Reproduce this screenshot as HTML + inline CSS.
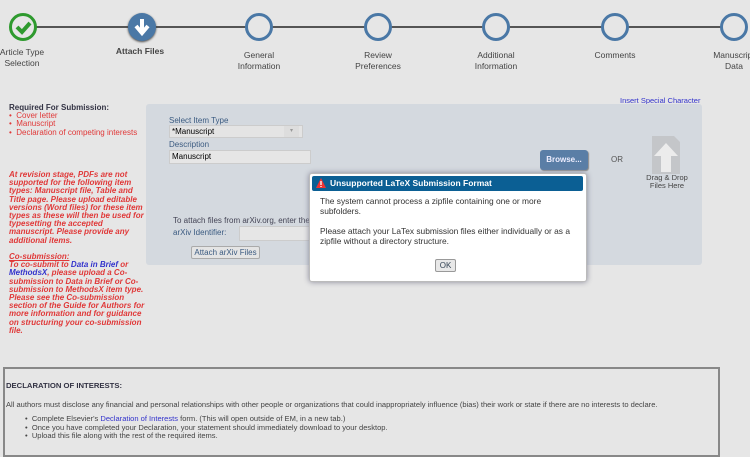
<!DOCTYPE html>
<html><head><style>
body{margin:0;width:750px;height:450px;background:#e6e6e6;font-family:"Liberation Sans",sans-serif;position:relative;overflow:hidden}
.a{position:absolute}
.c{position:absolute;border:3px solid #4a78a6;border-radius:50%;top:13px;box-sizing:border-box;width:28px;height:28px;background:#e6e6e6}
.lbl{position:absolute;font-size:8.5px;color:#444;text-align:center;width:90px;line-height:11px}
.red{color:#e03838}
</style></head><body>
<div class="a" style="left:23px;top:26px;width:711px;height:2px;background:#555"></div>
<div class="c" style="left:9px;border-color:#2e9a2e;"></div>
<svg class="a" style="left:9px;top:13px" width="28" height="28"><path d="M8 14l5 5 8-9" stroke="#2e9a2e" stroke-width="4" fill="none"/></svg>
<div class="a" style="left:128px;top:13px;width:28px;height:28px;border-radius:50%;background:#4a78a6;box-shadow:0 1px 2px #444"></div>
<svg class="a" style="left:128px;top:13px" width="28" height="28"><path d="M14 6v12M8 13l6 7 6-7" stroke="#fff" stroke-width="4" fill="none"/></svg>
<div class="c" style="left:245px"></div><div class="c" style="left:364px"></div><div class="c" style="left:482px"></div><div class="c" style="left:601px"></div><div class="c" style="left:720px"></div>
<div class="lbl" style="left:-23px;top:47px">Article Type<br>Selection</div>
<div class="lbl" style="left:95px;top:46px;font-weight:bold">Attach Files</div>
<div class="lbl" style="left:214px;top:50px">General<br>Information</div>
<div class="lbl" style="left:333px;top:50px">Review<br>Preferences</div>
<div class="lbl" style="left:451px;top:50px">Additional<br>Information</div>
<div class="lbl" style="left:570px;top:50px">Comments</div>
<div class="lbl" style="left:689px;top:50px">Manuscript<br>Data</div>

<div class="a" style="left:9px;top:104px;font-size:8px;font-weight:bold;color:#334;line-height:8.5px">Required For Submission:</div>
<div class="a red" style="left:9px;top:112px;font-size:8px;line-height:8.3px">•&nbsp;&nbsp;Cover letter<br>•&nbsp;&nbsp;Manuscript<br>•&nbsp;&nbsp;Declaration of competing interests</div>
<div class="a red" style="left:9px;top:171px;width:138px;font-size:8px;font-weight:bold;font-style:italic;line-height:8.2px">At revision stage, PDFs are not supported for the following item types: Manuscript file, Table and Title page. Please upload editable versions (Word files) for these item types as these will then be used for typesetting the accepted manuscript. Please provide any additional items.<br><br><u>Co-submission:</u><br>To co-submit to <span style="color:#33c">Data in Brief</span> or <span style="color:#33c">MethodsX</span>, please upload a Co-submission to Data in Brief or Co-submission to MethodsX item type. Please see the Co-submission section of the Guide for Authors for more information and for guidance on structuring your co-submission file.</div>

<div class="a" style="left:620px;top:96px;font-size:7.5px;color:#33c">Insert Special Character</div>
<div class="a" style="left:146px;top:104px;width:556px;height:161px;background:#d4d9df;border-radius:3px"></div>
<div class="a" style="left:169px;top:116px;font-size:8px;color:#3a5a80">Select Item Type</div>
<div class="a" style="left:169px;top:125px;width:130px;height:11px;background:#e4e4e4;border:1px solid #ccc;font-size:8px;line-height:11px;padding-left:2px">*Manuscript</div>
<div class="a" style="left:284px;top:126px;width:15px;height:11px;background:#ddd;font-size:6px;color:#999;text-align:center;line-height:11px">▾</div>
<div class="a" style="left:169px;top:140px;font-size:8px;color:#3a5a80">Description</div>
<div class="a" style="left:169px;top:150px;width:138px;height:12px;background:#e6e6e6;border:1px solid #ccc;font-size:8px;line-height:12px;padding-left:2px">Manuscript</div>
<div class="a" style="left:173px;top:216px;font-size:8px;color:#445">To attach files from arXiv.org, enter the a</div>
<div class="a" style="left:173px;top:228px;font-size:8px;color:#3a5a80">arXiv Identifier:</div>
<div class="a" style="left:239px;top:226px;width:70px;height:13px;background:#e6e6e6;border:1px solid #ccc"></div>
<div class="a" style="left:191px;top:246px;width:67px;height:11px;background:#e4e4e4;border:1px solid #aaa;border-radius:2px;font-size:8px;color:#3a5a80;text-align:center;line-height:11px">Attach arXiv Files</div>
<div class="a" style="left:540px;top:150px;width:48px;height:20px;background:#5a7ea6;border-radius:3px;color:#eef;font-size:8px;font-weight:bold;text-align:center;line-height:20px;box-shadow:1px 1px 1px #888">Browse...</div>
<div class="a" style="left:611px;top:155px;font-size:8px;color:#555">OR</div>
<svg class="a" style="left:652px;top:136px" width="30" height="38"><path d="M0 0h22l6 6v32H0z" fill="#c4c6c9"/><path d="M2 20l12-13 12 13h-7v16h-10v-16z" fill="#ececec"/></svg>
<div class="a" style="left:640px;top:174px;width:54px;text-align:center;font-size:7.5px;color:#444;line-height:8px">Drag &amp; Drop<br>Files Here</div>

<div class="a" style="left:309px;top:173px;width:276px;height:107px;background:#fff;border:1px solid #bbb;border-radius:3px;box-shadow:0 0 6px #889"></div>
<div class="a" style="left:312px;top:176px;width:271px;height:15px;background:#0b5f94;border-radius:2px;color:#fff;font-size:8.5px;font-weight:bold;line-height:15px;padding-left:18px;box-sizing:border-box">Unsupported LaTeX Submission Format</div>
<svg class="a" style="left:315px;top:177px" width="12" height="12"><path d="M6 1L11 11H1z" fill="#e33"/><path d="M6 4v4M6 9v1" stroke="#fff" stroke-width="1.3"/></svg>
<div class="a" style="left:320px;top:196px;width:250px;font-size:8.4px;color:#333;line-height:10px">The system cannot process a zipfile containing one or more subfolders.<br><br>Please attach your LaTex submission files either individually or as a zipfile without a directory structure.</div>
<div class="a" style="left:435px;top:259px;width:19px;height:11px;background:#e8e8e8;border:1px solid #999;border-radius:2px;font-size:8px;color:#345;text-align:center;line-height:11px">OK</div>

<div class="a" style="left:3px;top:367px;width:717px;height:90px;border:2px solid #888;box-sizing:border-box"></div>
<div class="a" style="left:6px;top:381px;font-size:7.7px;font-weight:bold;color:#334">DECLARATION OF INTERESTS:</div>
<div class="a" style="left:6px;top:400px;font-size:7.55px;color:#444;white-space:nowrap">All authors must disclose any financial and personal relationships with other people or organizations that could inappropriately influence (bias) their work or state if there are no interests to declare.</div>
<div class="a" style="left:25px;top:415px;font-size:7.55px;color:#444;line-height:8.5px">•&nbsp;&nbsp;Complete Elsevier's <span style="color:#33c">Declaration of Interests</span> form. (This will open outside of EM, in a new tab.)<br>•&nbsp;&nbsp;Once you have completed your Declaration, your statement should immediately download to your desktop.<br>•&nbsp;&nbsp;Upload this file along with the rest of the required items.</div>
</body></html>
